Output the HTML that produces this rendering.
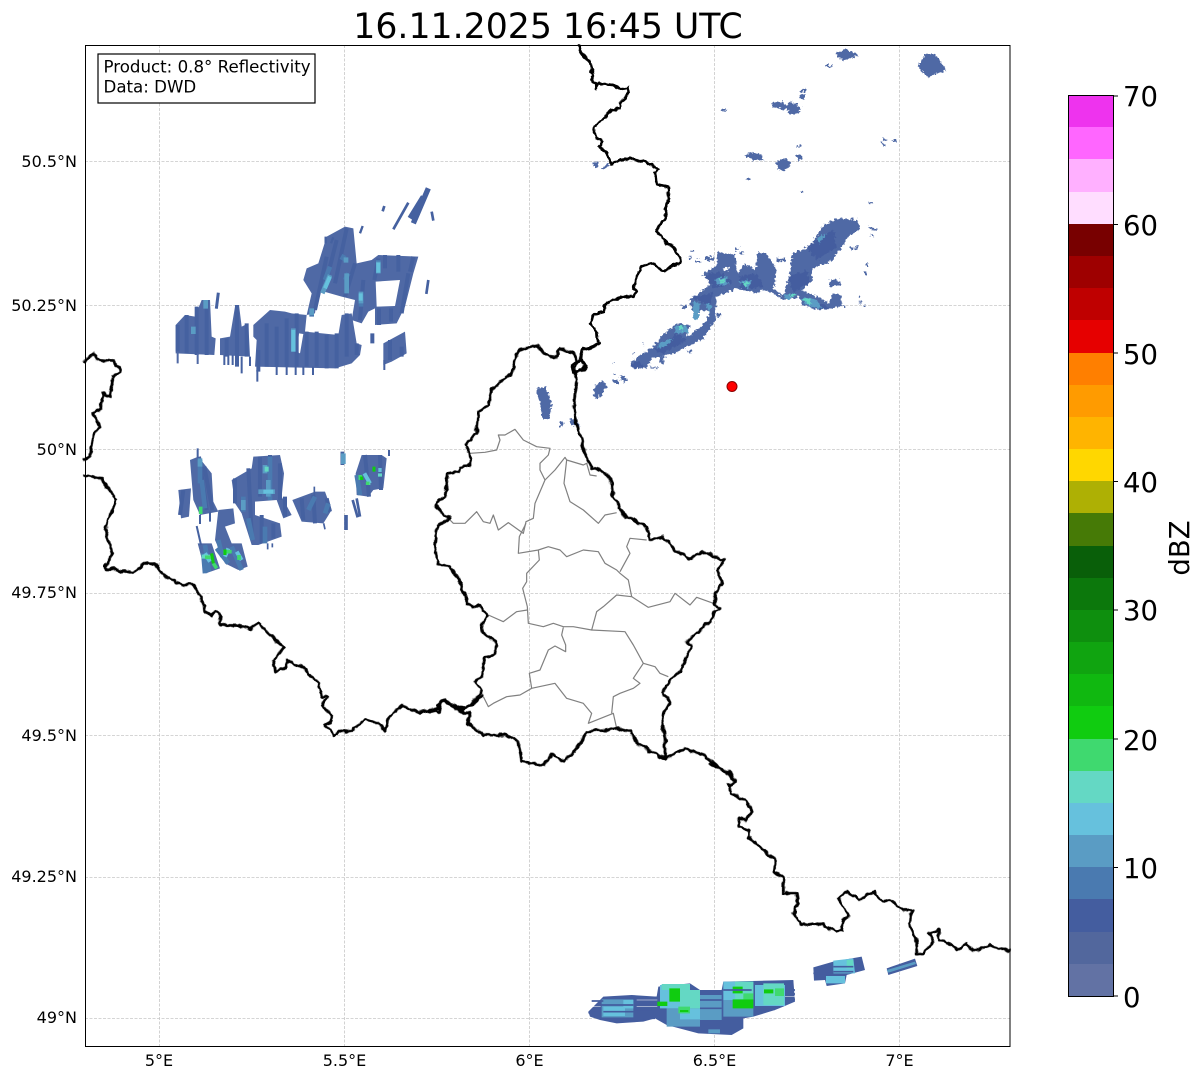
<!DOCTYPE html>
<html><head><meta charset="utf-8"><title>Radar</title>
<style>
html,body{margin:0;padding:0;background:#fff}
svg{display:block}
text{font-family:"DejaVu Sans",sans-serif;fill:#000}
.l{font-size:16px;text-anchor:end}
.b{font-size:16px;text-anchor:middle}
.c{font-size:27.5px}
.n{fill:none;stroke-linecap:butt}
</style></head><body>
<svg width="1202" height="1081" viewBox="0 0 1202 1081" xmlns="http://www.w3.org/2000/svg">
<defs>
<filter id="rough" filterUnits="userSpaceOnUse" x="0" y="0" width="1202" height="1081" color-interpolation-filters="sRGB">
<feTurbulence type="fractalNoise" baseFrequency="0.35" numOctaves="2" seed="4"/>
<feDisplacementMap in="SourceGraphic" scale="6" xChannelSelector="R" yChannelSelector="G"/>
</filter>
<filter id="wig" filterUnits="userSpaceOnUse" x="0" y="0" width="1202" height="1081" color-interpolation-filters="sRGB">
<feTurbulence type="fractalNoise" baseFrequency="0.14" numOctaves="2" seed="7"/>
<feDisplacementMap in="SourceGraphic" scale="5" xChannelSelector="R" yChannelSelector="G"/>
</filter>
</defs>
<rect width="1202" height="1081" fill="#fff"/>
<text x="548" y="38" text-anchor="middle" style="font-size:34.700px">16.11.2025 16:45 UTC</text>

<!-- grid -->
<g stroke="#c8c8c8" stroke-width="0.8" stroke-dasharray="3 1.500" fill="none">
<path d="M159.500 45V1046M344.500 45V1046M529.500 45V1046M714.500 45V1046M899.500 45V1046"/>
<path d="M85 161.500H1010M85 305.500H1010M85 449.500H1010M85 593.500H1010M85 735.500H1010M85 877.500H1010M85 1018.500H1010"/>
</g>

<!-- radar left clusters -->
<g transform="translate(85 180) scale(.33333)">
<g fill="#4f69a5">
<path d="M272 435L300 405L330 410L350 360L375 360L380 470L392 475L388 525L272 520Z"/>
<path d="M405 475L435 470L450 380L462 375L470 440L490 430L495 530L405 525Z"/>
<path d="M505 435L555 390L600 395L620 400L665 405L660 455L760 465L770 405L800 400L815 490L830 495L825 525L800 550L750 565L510 560L515 480L505 470Z"/>
<path d="M655 300L665 265L700 250L725 170L780 140L805 145L815 250L860 240L880 225L1000 230L985 280L960 380L935 430L870 435L870 385L850 395L830 430L800 420L810 360L770 350L700 330L690 400L665 405L680 340Z"/>
<path d="M895 490L960 455L965 520L920 545L895 555Z"/>
<path d="M315 840L340 830L380 880L385 965L400 995L345 1005L325 960Z"/>
<path d="M280 930L318 925L312 1010L288 1015Z"/>
<path d="M440 900L500 865L505 830L585 825L597 880L590 950L620 1005L595 1015L575 960L510 965L510 1005L585 1030L590 1070L520 1095L500 1095L470 1000L450 970Z"/>
<path d="M400 990L445 985L450 1030L420 1040L440 1090L470 1090L488 1160L460 1170L420 1150L390 1080Z"/>
<path d="M338 1090L380 1090L405 1165L362 1180Z"/>
<path d="M622 960L690 935L720 935L740 990L715 1030L650 1025Z"/>
<path d="M830 825L890 825L905 835L895 925L865 930L850 950L815 945L812 880Z"/>
</g>
<path fill="#fff" d="M872 305L945 300L930 378L875 380Z M642 460L655 462L645 520L635 515Z"/>
<g class="n" stroke="#4561a0" stroke-width="12">
<path d="M278 435V515M305 405V520M335 380V525M365 360V525"/>
<path stroke="#4f69a5" stroke-width="6" d="M278 515V550M338 520V552"/>
<path stroke-width="9" d="M400 338L394 386"/>
<path d="M425 475V530M456 375V560M485 430V530"/>
<path stroke-width="6" d="M418 525V555M430 525V555M443 525V555M495 530V558M470 530V580"/>
<path d="M520 510V575M545 430V560M575 440V560M605 415V560M635 400V560M665 455V560M695 455V560M725 465V565M755 460V565M785 400V530M815 490V525"/>
<path stroke-width="6" d="M517 570V605M575 560V585M605 560V585M632 560V585M655 560V585M684 560V585"/>
<path d="M690 390L725 230M720 320L755 180M750 310L785 145M780 350L810 250M825 420L835 300"/>
<path stroke-width="7" d="M722 190V170M738 190L745 172M825 160L833 138"/>
<path d="M868 300L880 235M900 225V265M940 225V275M985 230L975 275M970 280L950 400M882 385V435M918 385V425M862 460V490"/>
<path d="M915 480V540M950 500V530"/>
<path stroke-width="6" d="M898 540V570"/>
<path stroke-width="8" d="M970 68L925 148M1040 95L1045 122M898 78L893 94M1030 300L1024 342"/>
<path stroke-width="16" d="M1030 25L985 130M1015 50L975 115"/>
<path d="M342 830L365 990M358 860L382 990M295 930L285 1005"/>
<path stroke-width="6" d="M338 805V835M345 1005V1032M375 995V1025"/>
<path stroke-width="6" d="M335 1038L348 1095"/>
<path d="M450 895V970M490 865L500 1060M525 830V950M555 825V960M585 850V960M600 950V1010M530 1005V1090M565 1030V1075"/>
<path stroke-width="5" d="M548 1090V1108M562 1090V1102"/>
<path d="M650 955L655 1020M685 945L690 1030M725 955L735 995M840 825L852 950M885 825L888 930"/>
<path stroke-width="5" d="M688 920V945M716 1030L720 1048"/>
<path stroke-width="11" d="M783 1005V1050M772 815V855"/>
<path stroke-width="6" d="M912 810V828"/>
<path stroke-width="8" d="M803 960L818 1012M815 955L825 1010"/>
<path stroke="#4a7ab0" stroke-width="14" d="M360 1095L372 1175M440 1100L470 1170M400 1080L412 1130M355 1120L360 1180M395 1105L430 1150"/>
<g stroke="#4a7ab0" stroke-width="14">
<path d="M345 840V910M350 900L360 985M475 950V995M555 830L555 960M490 1015L503 1080M540 1040V1090M690 950L670 990M730 970L720 1000"/>
<path d="M815 885L825 945M680 400V410"/>
<path d="M720 300L735 260M780 300L790 280M770 240L778 225M828 345V380M880 240V280"/>
</g>
<g stroke="#5a9cc4" stroke-width="14">
<path d="M325 440V462M362 360V386M625 445V515M735 285L712 340M785 280V340M783 232V248M828 335V370M880 245V280"/>
<path d="M345 835V860M520 935H570M550 900V950M540 855V880M475 960V990M680 385V405M775 820V852"/>
</g>
<g stroke="#66c1dd">
<path stroke-width="12" d="M625 450V515M880 248V278M827 340V362M735 290L720 325M535 935H565"/>
<path stroke-width="12" d="M430 1105L420 1130M360 1120L375 1145M455 1115L470 1140M838 880L855 910M880 870H890"/>
</g>
<g stroke="#64d8c4" stroke-width="12"><path d="M545 860V875M850 905V915M885 880V890M350 1130H375"/></g>
<g stroke="#3fd96f" stroke-width="11"><path d="M347 980V1002M415 1115H440M360 1132H385M462 1125V1140M848 905V915M826 885V900M385 1150L395 1165"/></g>
<g stroke="#10cc10" stroke-width="9"><path d="M867 860V875M380 1120L385 1150M420 1108V1125M830 890V900"/></g>
</g>
</g>

<!-- radar NE -->
<g filter="url(#rough)">
<g transform="translate(620 210) scale(.33333)">
<path fill="#4f69a5" d="M30 460L60 435L95 415L120 385L170 340L210 345L215 370L245 350L265 320L270 305L245 300L225 320L215 300L210 265L250 240L285 210L245 195L290 165L295 125L345 135L352 190L375 160L405 180L415 125L440 130L470 180L460 235L490 260L510 190L515 130L570 110L610 45L650 25L715 30L720 55L680 85L640 150L580 175L575 215L545 240L590 260L625 280L640 250L665 255L665 290L600 300L545 285L540 260L490 270L460 250L430 240L410 250L350 235L290 260L285 330L250 385L205 410L150 435L100 445L75 475L40 475Z"/>
<path fill="#fff" d="M240 305L255 305L255 325L240 322Z M310 172L325 172L325 182L310 182Z M200 360L218 350L215 375L200 375Z"/>
<g fill="#445d9f"><path d="M100 420L170 370L200 390L130 430Z M255 195L300 185L340 220L280 235Z M355 200L410 190L430 230L365 240Z M505 200L560 180L570 220L520 245Z M560 110L640 60L650 110L590 150Z M30 465L60 450L70 470L40 475Z M220 260L280 250L270 290L230 270Z M560 270L620 285L630 300L580 295Z"/></g>
<g fill="#5a9cc4"><path d="M165 350L200 345L205 370L170 370Z M285 205L320 200L325 225L290 225Z M355 215L395 210L385 235Z M220 275L240 280L235 330L218 325Z M255 280L275 285L270 310Z M540 265L585 265L610 295L570 290Z M490 255L530 250L505 270Z M125 395L160 385L135 410L110 415Z M590 85L620 70L600 100Z"/></g>
<g fill="#64d8c4"><path d="M170 350L192 345L190 365Z M295 205L318 210L305 222Z M365 218L388 218L375 232Z M545 270L570 265L572 282Z M505 255L530 250L518 262Z"/></g>
<g fill="#4f69a5"><path d="M40 425h6v6h-6zM65 398h6v6h-6zM210 120h14v6h-14zM205 140h12v6h-12zM225 150h20v8h-20zM255 140h28v12h-28zM345 115h12v6h-12zM358 125h14v6h-14zM470 145h26v10h-26zM630 210h30v18h-30zM690 110h8v8h-8zM705 108h8v8h-8zM738 160h6v8h-6zM735 185h6v8h-6zM715 255h6v8h-6zM718 275h6v8h-6zM730 285h6v6h-6zM668 288h6v6h-6zM745 48l28 10-6 6-22-10zM750 70l14 8-4 4-10-8zM185 285h16v10h-16zM290 310h14v10h-14zM205 420h10v10h-10zM120 440h10v20h-10zM90 470h22v6h-22z"/></g>
</g>
<g transform="translate(570 40) scale(.33333)" fill="#4f69a5">
<path d="M795 40L830 28L868 45L825 60L810 58Z M765 75H785V80H765Z M455 207H470V214H455Z M605 185H635L650 195L665 185L695 205L672 227L660 222L655 210L605 200Z M690 165L705 162L704 178L688 177Z M692 148H708V155H692Z M1045 80L1065 42L1095 42L1130 90L1100 100L1070 112L1055 92Z M522 347L545 337L575 345L580 362L550 360Z M620 365L640 355L665 368L645 392H625Z M672 345H695L700 358L685 358Z M680 316H692V321H680Z M530 414H540V420H530Z M690 453H700V459H690Z M895 483L900 480L906 490L900 492Z M930 303L950 314L945 318L930 308Z M940 292L950 302L945 304L938 296Z M970 296L983 302L980 308L968 302Z M70 368L82 365L85 382L70 380Z M95 385L115 370L118 380L100 388Z M70 1050L92 1022L112 1040L90 1065L75 1072Z"/>
<path d="M130 1000h6v6h-6zM155 1005l15 12-5 10-18-12zM130 1020h12v6h-12zM127 967h4v4h-4z"/>
</g>
<!-- Lux interior specks -->
<g transform="translate(420 340) scale(.33333)" fill="#4f69a5">
<path d="M350 145L378 140L395 195L388 235L365 235L362 190L350 165Z M522 145L543 120L562 140L540 170L524 178Z M580 120h14v12h-14zM605 100l20 20-8 6-14-14zM420 245h12v16h-12zM450 235l25 5 3 20-28-8z"/>
</g>
</g>

<!-- radar bottom -->
<g transform="translate(580 940) scale(.33333)">
<path fill="#445d9f" d="M25 215L70 170L155 165L230 170L235 140L330 130L360 150L425 150L430 125L640 120L645 185L610 200L585 210L520 230L490 235L490 265L455 285L355 280L260 255L225 235L190 245L110 250L60 240L30 230Z"/>
<path fill="#445d9f" d="M700 82L760 65L845 50L855 90L800 105L795 130L740 138L735 120L702 122Z M920 85L1005 56L1012 78L925 105Z"/>
<g fill="#5a9cc4">
<path d="M65 178H160V232H65Z M360 165H425V240H360Z M260 205H360V260H260Z M385 268H420V280H385Z"/>
<path d="M430 180H520V230H430Z M920 90L1005 65L1008 72L925 98Z"/>
</g>
<g fill="#66c1dd">
<path d="M70 200H135V228H70Z M130 180H160V205H130Z M240 135H330V205H240Z M525 135H615V198H525Z M430 125H520V180H430Z M760 62L820 55L825 100H760Z M738 108H795V130H738Z M300 205H360V238H300Z"/>
</g>
<g fill="#64d8c4">
<path d="M245 132H330V150H245Z M300 150H360V205H300Z M465 125H520V178H465Z M550 130H612V195H550Z M800 60H820V85H800Z"/>
</g>
<g fill="#3fd96f"><path d="M295 200H330V220H295Z M490 160H520V178H490Z M585 145H612V168H585Z"/></g>
<g fill="#10cc10"><path d="M232 185H262V198H232Z M268 145H300V185H268Z M458 140H488V160H458Z M458 178H520V205H458Z M552 148H580V160H552Z M300 210H325V216H300Z"/></g>
<g class="n" stroke="#445d9f" stroke-width="5">
<path d="M35 183H70M25 218H62M160 172H232M165 190H230M170 208H215M190 235H225M60 195H160M70 215H190M360 180H425M360 205H425M430 150H515M615 150H645M615 162H645M615 178H645M550 125H640M550 208H585M700 100H760M760 80H820M760 95H820"/>
</g>
<g class="n" stroke="#fff" stroke-width="1.500"><path d="M35 200H62M170 180H232M170 200H232M615 170H645"/></g>
</g>

<!-- county lines -->
<g transform="translate(420 340) scale(.33333)" fill="none" stroke="#808080" stroke-width="3.600" stroke-linejoin="round">
<path d="M150 340L195 337L230 330L240 300L235 285L255 285L285 268L310 300L350 320L390 325L385 345L360 370L360 390L375 420L345 490L340 535L318 545L310 580L265 548L235 570L220 525L210 550L190 545L170 515L135 550L100 550L90 540"/>
<path d="M375 420L405 390L435 352L440 360L490 375L500 370L510 405L530 408"/>
<path d="M440 360L432 430L450 485L490 510L535 550L555 525L590 518"/>
<path d="M318 550L298 590L295 640L355 630L385 620L420 630L440 650L490 630L535 635L555 670L590 690L600 700L625 720L635 770"/>
<path d="M600 695L630 640L620 620L630 595L680 600"/>
<path d="M355 630L358 660L320 700L320 725L308 745L322 800L325 850L370 860L400 850L430 860L460 860L515 870L530 815L550 800L590 765L635 770L685 802L750 785L765 760L810 795L830 772L880 790"/>
<path d="M205 825L250 845L290 815L322 810"/>
<path d="M430 862L425 885L437 915L437 935L405 918L385 930L360 990L328 1000L335 1045L300 1065L260 1070L220 1090L205 1100L190 1070"/>
<path d="M335 1045L405 1030L440 1075L490 1090L515 1120L505 1150L580 1120L590 1165"/>
<path d="M515 870L615 875L640 915L670 970L705 980L720 1000L745 1010"/>
<path d="M670 970L640 1015L660 1030L640 1045L600 1060L580 1070L575 1120"/>
</g>

<!-- borders -->
<g fill="none" stroke="#000" stroke-linejoin="round" stroke-linecap="round" filter="url(#wig)">
<g transform="translate(570 40) scale(.33333)" stroke-width="8.400">
<path d="M25 18L40 45L60 70L70 105L65 120L80 135L75 147L85 130L130 135L150 145L175 142L178 155L150 190L150 205L125 210L100 235L72 265L80 295L98 305L88 320L110 340L125 370L150 360L180 355L210 365L225 362L250 380L268 385L255 400L260 432L293 440L297 475L285 510L288 530L275 550L258 573L280 600L310 625L330 650L328 670L300 678L280 695L265 680L240 670L218 678L205 700L190 745L200 755L190 770L160 770L130 780L105 795L100 815L70 825L62 848L82 875L85 912L60 920L40 925L33 945L45 975L40 990L10 995L8 975L30 960"/>
</g>
<g transform="translate(420 340) scale(.33333)" stroke-width="8.400">
<path d="M540 10L510 25L488 30L480 60L497 75L495 90L460 95L470 70L465 45L440 30L415 30L410 50L375 45L355 15L295 30L285 60L275 100L240 125L215 150L205 195L175 215L170 280L135 315L150 345L150 375L120 380L115 395L85 400L75 470L45 495L60 515L92 535L55 555L48 580L45 620L55 675L90 680L115 715L140 780L140 795L175 797L205 825L185 855L190 880L228 905L225 945L195 950L185 1010L165 1025L185 1055L170 1075L125 1110"/>
<path d="M120 1110L130 1120L150 1120L145 1150L190 1185L260 1185L295 1205L305 1265L370 1275L395 1245L435 1265L470 1225L500 1175L590 1165L630 1175L655 1215L735 1255L795 1225L850 1245L945 1320"/>
<path d="M465 95L470 130L460 200L465 230L480 285L495 340L515 385L540 390L575 420L580 470L610 525L680 560L690 600L730 590L770 635L810 655L850 635L900 660L915 655L895 690L905 730L885 760L885 795L900 805L885 815L870 845L800 905L815 915L785 990L750 1020L725 1060L750 1085L725 1130L735 1200L735 1255"/>
<path d="M0 1115L30 1110L55 1105L55 1095L70 1080L110 1105L120 1110"/>
</g>
<g transform="translate(660 740) scale(.33333)" stroke-width="8.400">
<path d="M150 70L210 100L225 125L205 135L215 160L255 180L275 215L260 240L235 235L240 260L265 270L265 290L345 360L345 395L370 410L370 460L410 460L415 490L400 520L425 555L475 550L530 575L545 570L550 540L565 525L535 475L560 455L600 478L645 455L665 485L690 480L725 510L755 510L750 560L770 610L770 640L790 640L805 620L820 610L808 580L835 570L835 600L855 600L890 630L920 610L940 635L985 615L1035 630L1050 630"/>
</g>
<g transform="translate(85 560) scale(.33333)" stroke-width="8.400">
<path d="M60 15L65 30L80 25L115 37L155 33L175 10L210 10L240 50L295 75L325 73L358 135L360 155L380 165L390 155L403 160L407 195L455 195L495 205L520 190L595 262L565 300L570 335L600 325L608 303L655 322L700 370L710 410L725 412L712 435L740 465L738 485L720 495L735 510L745 530L760 515L800 510L840 478L880 490L900 515L910 475L950 437L1005 460L1045 450L1062 458L1065 425L1080 420L1125 445L1160 435L1195 405"/>
</g>
<g transform="translate(85 180) scale(.33333)" stroke-width="8.400">
<path d="M0 545L25 520L35 540L85 545L108 572L85 590L75 650L55 640L45 690L22 700L45 740L25 770L15 830L0 838"/>
<path d="M0 885L50 895L95 960L60 1045L80 1120L62 1165"/>
</g>
</g>

<!-- marker -->
<circle cx="732" cy="386.500" r="5" fill="#f00" stroke="#8a0000" stroke-width="1"/>

<!-- mask border overflow -->
<path fill="#fff" d="M0 0H85V1081H0ZM1010 0H1060V1081H1010Z" opacity="0"/>

<!-- spine -->
<rect x="85.500" y="45.500" width="924.500" height="1001" fill="none" stroke="#000" stroke-width="1"/>

<!-- info box -->
<rect x="98" y="54" width="217" height="49" fill="#fff" stroke="#000" stroke-width="1.200"/>
<text x="103.500" y="72.500" style="font-size:16.650px">Product: 0.8° Reflectivity</text>
<text x="103.500" y="92.500" style="font-size:16.650px">Data: DWD</text>

<!-- axis labels -->
<text x="77" y="167" class="l">50.5°N</text>
<text x="77" y="311" class="l">50.25°N</text>
<text x="77" y="455" class="l">50°N</text>
<text x="77" y="598" class="l">49.75°N</text>
<text x="77" y="741" class="l">49.5°N</text>
<text x="77" y="882" class="l">49.25°N</text>
<text x="77" y="1023" class="l">49°N</text>
<text x="159" y="1066" class="b">5°E</text>
<text x="344.500" y="1066" class="b">5.5°E</text>
<text x="529.500" y="1066" class="b">6°E</text>
<text x="714.500" y="1066" class="b">6.5°E</text>
<text x="899.500" y="1066" class="b">7°E</text>

<!-- colorbar -->
<g shape-rendering="crispEdges">
<rect x="1068" y="96" width="45" height="33" fill="#ee33ee"/>
<rect x="1068" y="127" width="45" height="33" fill="#ff66ff"/>
<rect x="1068" y="159" width="45" height="33" fill="#ffb0ff"/>
<rect x="1068" y="192" width="45" height="33" fill="#ffddff"/>
<rect x="1068" y="224" width="45" height="33" fill="#780000"/>
<rect x="1068" y="256" width="45" height="33" fill="#9e0000"/>
<rect x="1068" y="288" width="45" height="33" fill="#bf0000"/>
<rect x="1068" y="320" width="45" height="33" fill="#e60000"/>
<rect x="1068" y="353" width="45" height="33" fill="#ff7f00"/>
<rect x="1068" y="385" width="45" height="33" fill="#ff9b00"/>
<rect x="1068" y="417" width="45" height="33" fill="#ffb400"/>
<rect x="1068" y="449" width="45" height="33" fill="#ffd700"/>
<rect x="1068" y="481" width="45" height="33" fill="#aeb004"/>
<rect x="1068" y="513" width="45" height="33" fill="#467a06"/>
<rect x="1068" y="546" width="45" height="33" fill="#095f09"/>
<rect x="1068" y="578" width="45" height="33" fill="#0c780c"/>
<rect x="1068" y="610" width="45" height="33" fill="#0e8f0e"/>
<rect x="1068" y="642" width="45" height="33" fill="#10a410"/>
<rect x="1068" y="674" width="45" height="33" fill="#10b810"/>
<rect x="1068" y="706" width="45" height="33" fill="#10cc10"/>
<rect x="1068" y="739" width="45" height="33" fill="#3fd96f"/>
<rect x="1068" y="771" width="45" height="33" fill="#64d8c4"/>
<rect x="1068" y="803" width="45" height="33" fill="#66c1dd"/>
<rect x="1068" y="835" width="45" height="33" fill="#5a9cc4"/>
<rect x="1068" y="867" width="45" height="33" fill="#4a7ab0"/>
<rect x="1068" y="899" width="45" height="33" fill="#445d9f"/>
<rect x="1068" y="932" width="45" height="32" fill="#52679d"/>
<rect x="1068" y="964" width="45" height="32" fill="#6272a4"/>
</g>
<rect x="1068.500" y="95.500" width="45" height="901" fill="none" stroke="#000" stroke-width="1"/>
<path d="M1113 96h5M1113 224.500h5M1113 353h5M1113 481.500h5M1113 610h5M1113 739h5M1113 867.500h5M1113 996h5" stroke="#000" stroke-width="1"/>
<text x="1123" y="106" class="c">70</text>
<text x="1123" y="235" class="c">60</text>
<text x="1123" y="364" class="c">50</text>
<text x="1123" y="492" class="c">40</text>
<text x="1123" y="620" class="c">30</text>
<text x="1123" y="750" class="c">20</text>
<text x="1123" y="878" class="c">10</text>
<text x="1123" y="1007" class="c">0</text>
<text transform="translate(1189 548) rotate(-90)" text-anchor="middle" class="c">dBZ</text>
</svg>
</body></html>
